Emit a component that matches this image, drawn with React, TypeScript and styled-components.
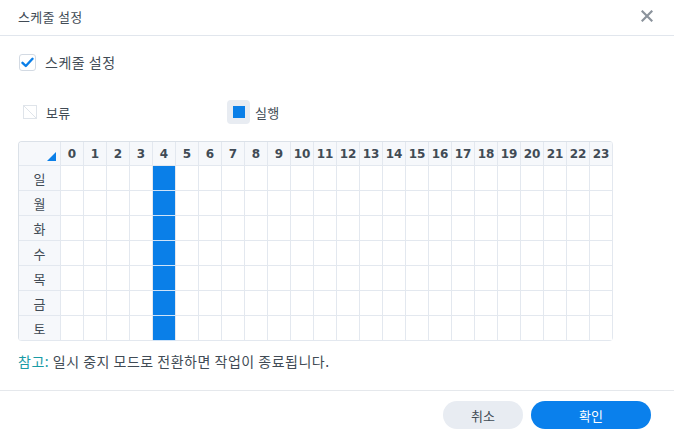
import { FC } from "react";
import styled, { createGlobalStyle } from "styled-components";

const GlobalStyle = createGlobalStyle`
  html, body {
    margin: 0;
    padding: 0;
    background: #ffffff;
  }
  body {
    font-family: "Noto Sans CJK KR", "Noto Sans", sans-serif;
    color: #414b55;
  }
`;

const DAYS = ["일", "월", "화", "수", "목", "금", "토"];
const HOURS = Array.from({ length: 24 }, (_, i) => i);
const ACTIVE_HOURS = [4];

const App: FC = () => {
  return (
    <>
      <GlobalStyle />
      <Dialog>
        <Header>
          <Title>스케줄 설정</Title>
          <Close aria-label="close">
            <svg width="12" height="12" viewBox="0 0 12 12">
              <path
                d="M1.5 1.5 L10.5 10.5 M10.5 1.5 L1.5 10.5"
                stroke="#8b939c"
                strokeWidth="2.2"
                strokeLinecap="square"
              />
            </svg>
          </Close>
        </Header>
        <Body>
          <CheckRow>
            <CheckBox>
              <svg width="13" height="11" viewBox="0 0 13 11">
                <path
                  d="M1.5 5.8 L4.8 9 L11.5 1.8"
                  fill="none"
                  stroke="#0a7fe8"
                  strokeWidth="2.4"
                  strokeLinecap="round"
                  strokeLinejoin="round"
                />
              </svg>
            </CheckBox>
            <Label wide>스케줄 설정</Label>
          </CheckRow>

          <Legend>
            <LegendItem>
              <PauseIcon>
                <svg width="14" height="14" viewBox="0 0 14 14">
                  <rect x="0.5" y="0.5" width="13" height="13" fill="none" stroke="#dfe4ea" />
                  <path d="M1 1 L13 13" stroke="#dfe4ea" strokeWidth="1" />
                </svg>
              </PauseIcon>
              <Label>보류</Label>
            </LegendItem>
            <LegendItem>
              <RunIcon>
                <span />
              </RunIcon>
              <Label>실행</Label>
            </LegendItem>
          </Legend>

          <Grid>
            <Corner>
              <svg width="9" height="9" viewBox="0 0 9 9">
                <path d="M9 0 L9 9 L0 9 Z" fill="#0a7fe8" />
              </svg>
            </Corner>
            {HOURS.map((h) => (
              <HourCell key={h}>{h}</HourCell>
            ))}
            {DAYS.map((d) => (
              <Row key={d}>
                <DayCell>{d}</DayCell>
                {HOURS.map((h) => (
                  <Cell key={h} active={ACTIVE_HOURS.includes(h)} />
                ))}
              </Row>
            ))}
          </Grid>

          <Note>
            <NoteLabel>참고:</NoteLabel> 일시 중지 모드로 전환하면 작업이 종료됩니다.
          </Note>
        </Body>
        <Footer>
          <Button>취소</Button>
          <Button primary>확인</Button>
        </Footer>
      </Dialog>
    </>
  );
};

export default App;

const Dialog = styled.div({
  width: "674px",
  height: "433px",
  display: "flex",
  flexDirection: "column",
  background: "#fff",
  overflow: "hidden",
});

const Header = styled.div({
  height: "35px",
  borderBottom: "1px solid #e1e6ed",
  display: "flex",
  alignItems: "center",
  justifyContent: "space-between",
  padding: "0 20px 0 18px",
});

const Title = styled.div({
  fontSize: "13px",
  letterSpacing: "0.3px",
  color: "#414b55",
  marginTop: "-3px",
});

const Close = styled.div({
  width: "14px",
  height: "14px",
  display: "flex",
  alignItems: "center",
  justifyContent: "center",
  marginTop: "-3px",
});

const Body = styled.div({
  flex: 1,
  padding: "0 18px",
  display: "flex",
  flexDirection: "column",
});

const CheckRow = styled.div({
  marginTop: "16px",
  height: "20px",
  display: "flex",
  alignItems: "center",
  paddingLeft: "1px",
});

const CheckBox = styled.div({
  width: "15px",
  height: "15px",
  border: "1px solid #d3dae3",
  borderRadius: "3px",
  display: "flex",
  alignItems: "center",
  justifyContent: "center",
  marginRight: "9px",
});

const Label = styled.span<{ wide?: boolean }>(({ wide }) => ({
  fontSize: wide ? "14px" : "13px",
  letterSpacing: wide ? "0.5px" : "0.3px",
  color: "#414b55",
}));

const Legend = styled.div({
  marginTop: "28px",
  height: "24px",
  display: "flex",
  alignItems: "center",
});

const LegendItem = styled.div({
  display: "flex",
  alignItems: "center",
  width: "209px",
});

const PauseIcon = styled.div({
  width: "14px",
  height: "14px",
  marginLeft: "5px",
  marginRight: "9px",
  display: "flex",
});

const RunIcon = styled.div({
  width: "23px",
  height: "24px",
  borderRadius: "4px",
  background: "#e8ecf2",
  display: "flex",
  alignItems: "center",
  justifyContent: "center",
  marginRight: "5px",
  "& > span": {
    width: "12px",
    height: "12px",
    background: "#0a7fe8",
  },
});

const Grid = styled.div({
  marginTop: "17px",
  width: "595px",
  boxSizing: "border-box",
  display: "grid",
  gridTemplateColumns: "42px repeat(24, 23px)",
  gridAutoRows: "25px",
  gridTemplateRows: "24px",
  borderTop: "1px solid #dbe1e8",
  borderLeft: "1px solid #dbe1e8",
  borderRadius: "4px",
  overflow: "hidden",
});

const Row = styled.div({
  display: "contents",
});

const BaseCell = styled.div({
  boxSizing: "border-box",
  borderRight: "1px solid #e3e8ef",
  borderBottom: "1px solid #e3e8ef",
  display: "flex",
  alignItems: "center",
  justifyContent: "center",
});

const Corner = styled(BaseCell)({
  background: "#f6f8fb",
  alignItems: "flex-end",
  justifyContent: "flex-end",
  padding: "0 4px 4px 0",
});

const HourCell = styled(BaseCell)({
  background: "#f6f8fb",
  fontFamily: '"DejaVu Sans", sans-serif',
  fontWeight: 700,
  fontSize: "12px",
  color: "#414b55",
});

const DayCell = styled(BaseCell)({
  background: "#f6f8fb",
  fontSize: "13px",
  color: "#414b55",
});

const Cell = styled(BaseCell)<{ active?: boolean }>(({ active }) => ({
  background: active ? "#0a7fe8" : "#fff",
  borderBottomColor: active ? "#cfe3f8" : "#e3e8ef",
}));

const Note = styled.div({
  marginTop: "11px",
  fontSize: "14px",
  letterSpacing: "0.5px",
  lineHeight: "18px",
  color: "#414b55",
});

const NoteLabel = styled.span({
  color: "#1a9ba6",
});

const Footer = styled.div({
  height: "43px",
  borderTop: "1px solid #e5e8ec",
  display: "flex",
  justifyContent: "flex-end",
  alignItems: "flex-start",
  gap: "8px",
  padding: "10px 23px 0 0",
  boxSizing: "border-box",
});

const Button = styled.button<{ primary?: boolean }>(({ primary }) => ({
  width: primary ? "120px" : "80px",
  height: "28px",
  border: "none",
  borderRadius: "14px",
  background: primary ? "#0a80ec" : "#e8ecf2",
  color: primary ? "#fff" : "#414b55",
  fontFamily: '"Noto Sans CJK KR", "Noto Sans", sans-serif',
  fontSize: "13px",
  padding: 0,
  cursor: "pointer",
}));
